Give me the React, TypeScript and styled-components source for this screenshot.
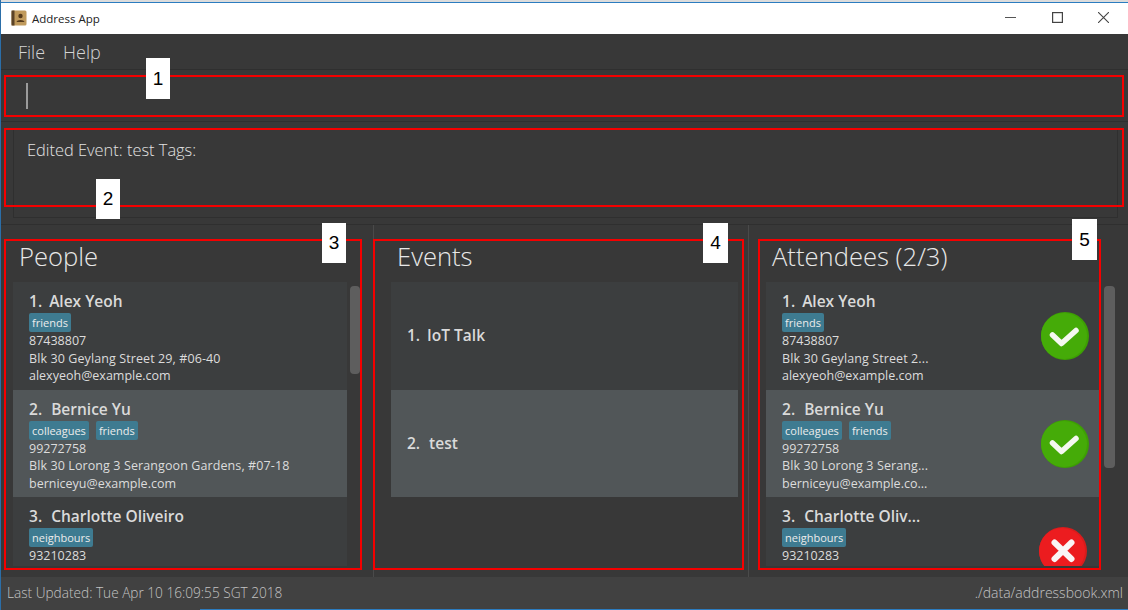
import React from "react";
import styled, { createGlobalStyle } from "styled-components";

type Person = {
  name: string;
  tags: string[];
  phone: string;
  address?: string;
  email?: string;
  going?: boolean;
};

const people: Person[] = [
  {
    name: "Alex Yeoh",
    tags: ["friends"],
    phone: "87438807",
    address: "Blk 30 Geylang Street 29, #06-40",
    email: "alexyeoh@example.com"
  },
  {
    name: "Bernice Yu",
    tags: ["colleagues", "friends"],
    phone: "99272758",
    address: "Blk 30 Lorong 3 Serangoon Gardens, #07-18",
    email: "berniceyu@example.com"
  },
  {
    name: "Charlotte Oliveiro",
    tags: ["neighbours"],
    phone: "93210283"
  }
];

const attendees: Person[] = [
  {
    name: "Alex Yeoh",
    tags: ["friends"],
    phone: "87438807",
    address: "Blk 30 Geylang Street 2...",
    email: "alexyeoh@example.com",
    going: true
  },
  {
    name: "Bernice Yu",
    tags: ["colleagues", "friends"],
    phone: "99272758",
    address: "Blk 30 Lorong 3 Serang...",
    email: "berniceyu@example.co...",
    going: true
  },
  {
    name: "Charlotte Oliv...",
    tags: ["neighbours"],
    phone: "93210283",
    going: false
  }
];

const marks = [
  { n: 1, x: 146, y: 58, w: 24, h: 41 },
  { n: 2, x: 96, y: 179, w: 24, h: 40 },
  { n: 3, x: 322, y: 223, w: 24, h: 40 },
  { n: 4, x: 703, y: 223, w: 25, h: 40 },
  { n: 5, x: 1072, y: 219, w: 25, h: 41 }
];

const outlines = [
  { x: 4, y: 75, w: 1120, h: 42 },
  { x: 4, y: 128, w: 1120, h: 79 },
  { x: 4, y: 239, w: 358, h: 331 },
  { x: 373, y: 239, w: 371, h: 331 },
  { x: 758, y: 239, w: 343, h: 331 }
];

const PersonCard = ({ person, index }: { person: Person; index: number }) => (
  <Card $selected={index === 1}>
    <div>
      <CardTitle>
        <Num $first={index === 0}>{index + 1}.</Num>
        {person.name}
      </CardTitle>
      <TagRow>
        {person.tags.map((t) => (
          <Tag key={t}>{t}</Tag>
        ))}
      </TagRow>
      <Line>{person.phone}</Line>
      {person.address && <AddressLine>{person.address}</AddressLine>}
      {person.email && <Line>{person.email}</Line>}
    </div>
    {person.going === true && (
      <Status $right={-6}>
        <svg viewBox="0 0 48 48" width="48" height="48">
          <circle cx="24" cy="24" r="24" fill="#3da003" />
          <circle cx="23" cy="24" r="23" fill="#45ab08" />
          <path d="M11.5 23 L20.5 31.5 L35 18.5" fill="none" stroke="#f5f8f1" strokeWidth="5.5" strokeLinecap="round" strokeLinejoin="round" />
        </svg>
      </Status>
    )}
    {person.going === false && (
      <Status $right={-4}>
        <svg viewBox="0 0 48 48" width="48" height="48">
          <circle cx="24" cy="24" r="24" fill="#d81c1c" />
          <circle cx="23" cy="24" r="23" fill="#ec1c1f" />
          <path d="M15.5 15.5 L32.5 32 M32.5 15.5 L15.5 32" fill="none" stroke="#faf5f5" strokeWidth="6" strokeLinecap="round" />
        </svg>
      </Status>
    )}
  </Card>
);

export default function App() {
  return (
    <Page>
      <GlobalStyle />
      <TitleBar>
        <AppTitle>
          <svg viewBox="0 0 16 16" width="16" height="16">
            <rect x="0.5" y="0.5" width="15" height="15" rx="1.5" fill="#c09a5c" />
            <rect x="0.5" y="0.5" width="3" height="15" fill="#5b4327" />
            <circle cx="9.5" cy="6" r="2.2" fill="#54391b" />
            <path d="M5.5 12 C6 9.2 13 9.2 13.5 12 Z" fill="#54391b" />
          </svg>
          Address App
        </AppTitle>
        <WindowButtons>
          <WindowButton>
            <svg viewBox="0 0 11 11" width="11" height="11">
              <path d="M0 5.5 H11" stroke="#555" strokeWidth="1" />
            </svg>
          </WindowButton>
          <WindowButton>
            <svg viewBox="0 0 11 11" width="11" height="11">
              <rect x="0.6" y="0.6" width="9.8" height="9.8" fill="none" stroke="#444" strokeWidth="1.2" />
            </svg>
          </WindowButton>
          <WindowButton>
            <svg viewBox="0 0 11 11" width="11" height="11">
              <path d="M0 0 L11 11 M11 0 L0 11" stroke="#444" strokeWidth="1.1" />
            </svg>
          </WindowButton>
        </WindowButtons>
      </TitleBar>

      <MenuBar>
        <span>File</span>
        <span>Help</span>
      </MenuBar>

      <CommandBox>
        <Caret />
      </CommandBox>

      <ResultSection>
        <ResultBox>Edited Event: test Tags:</ResultBox>
      </ResultSection>

      <Panels>
        <Panel $left={12} $right={13}>
          <PanelHeading>People</PanelHeading>
          <ListRow>
            <List>
              {people.map((p, i) => (
                <PersonCard key={p.name} person={p} index={i} />
              ))}
            </List>
            <ScrollTrack $width={10} $gap={3}>
              <ScrollThumb $height={88} />
            </ScrollTrack>
          </ListRow>
        </Panel>
        <Panel $left={17} $right={10}>
          <PanelHeading>Events</PanelHeading>
          <ListRow>
            <List>
              <EventCard>
                <CardTitle>
                  <Num $first>1.</Num>IoT Talk
                </CardTitle>
              </EventCard>
              <EventCard $selected>
                <CardTitle>
                  <Num>2.</Num>test
                </CardTitle>
              </EventCard>
            </List>
          </ListRow>
        </Panel>
        <Panel $left={17} $right={13}>
          <PanelHeading>Attendees (2/3)</PanelHeading>
          <ListRow>
            <List>
              {attendees.map((p, i) => (
                <PersonCard key={p.name} person={p} index={i} />
              ))}
            </List>
            <ScrollTrack $width={11} $gap={5}>
              <ScrollThumb $height={182} />
            </ScrollTrack>
          </ListRow>
        </Panel>
      </Panels>

      <StatusBar>
        <span>Last Updated: Tue Apr 10 16:09:55 SGT 2018</span>
        <FilePath>./data/addressbook.xml</FilePath>
      </StatusBar>

      {outlines.map((o) => (
        <Outline key={o.x + "-" + o.y} $x={o.x} $y={o.y} $w={o.w} $h={o.h} />
      ))}
      {marks.map((m) => (
        <Mark key={m.n} $x={m.x} $y={m.y} $w={m.w} $h={m.h}>
          {m.n}
        </Mark>
      ))}
    </Page>
  );
}

const GlobalStyle = createGlobalStyle`
  html, body {
    margin: 0;
    padding: 0;
    background: #383838;
  }
`;

const Page = styled.div`
  position: relative;
  width: 1128px;
  height: 610px;
  overflow: hidden;
  display: flex;
  flex-direction: column;
  background: #383838;
  font-family: "Open Sans", "Noto Sans", sans-serif;
  border-left: 1px solid #2b6ea8;
  box-sizing: border-box;
`;

const TitleBar = styled.div`
  height: 34px;
  flex: none;
  box-sizing: border-box;
  border-top: 2px solid #dcdcdc;
  display: flex;
  align-items: center;
  justify-content: space-between;
  background: #fff;
  box-shadow: inset 0 1px 0 #2b7cc0;
`;

const AppTitle = styled.div`
  display: flex;
  align-items: center;
  gap: 5px;
  padding-left: 10px;
  font-size: 11.5px;
  color: #222;
`;

const WindowButtons = styled.div`
  display: flex;
  padding-right: 1px;
  margin-top: -2px;
`;

const WindowButton = styled.div`
  width: 46.5px;
  height: 30px;
  display: flex;
  align-items: center;
  justify-content: center;
`;

const MenuBar = styled.div`
  height: 36px;
  flex: none;
  box-sizing: border-box;
  display: flex;
  align-items: center;
  gap: 18px;
  padding-left: 17px;
  font-size: 18px;
  font-weight: 300;
  color: #d4d4d4;
  border-bottom: 1px solid #2f2f2f;
`;

const CommandBox = styled.div`
  height: 52px;
  flex: none;
  box-sizing: border-box;
  display: flex;
  align-items: center;
  padding-left: 25px;
  border-bottom: 1px solid #2f2f2f;
`;

const Caret = styled.div`
  width: 2px;
  height: 26px;
  margin-top: 1px;
  background: #9b9b9b;
`;

const ResultSection = styled.div`
  height: 103px;
  flex: none;
  box-sizing: border-box;
  padding: 6px 10px 6px 12px;
  border-bottom: 1px solid #2f2f2f;
`;

const ResultBox = styled.div`
  height: 100%;
  box-sizing: border-box;
  padding: 10px 13px;
  border: 1px solid #2f2f2f;
  border-top: none;
  font-size: 16.4px;
  font-weight: 300;
  color: #e2e2e2;
`;

const Panels = styled.div`
  flex: 1;
  min-height: 0;
  display: grid;
  grid-template-columns: 373px 375px 1fr;
  grid-template-rows: minmax(0, 1fr);
`;

const Panel = styled.section<{ $left: number; $right: number }>`
  display: flex;
  flex-direction: column;
  min-width: 0;
  min-height: 0;
  box-sizing: border-box;
  padding: 0 ${(p) => p.$right}px 11px ${(p) => p.$left}px;
  border-right: 1px solid #4a4a4a;
  &:last-child {
    border-right: none;
  }
`;

const PanelHeading = styled.h2`
  margin: 0;
  height: 57px;
  flex: none;
  box-sizing: border-box;
  padding: 6px 0 0 6px;
  display: flex;
  align-items: center;
  font-size: 25.6px;
  font-weight: 300;
  color: #e8e8e8;
`;

const ListRow = styled.div`
  flex: 1;
  min-height: 0;
  display: flex;
`;

const List = styled.div`
  flex: 1;
  min-width: 0;
  overflow: hidden;
`;

const ScrollTrack = styled.div<{ $width: number; $gap: number }>`
  flex: none;
  width: ${(p) => p.$width}px;
  margin-left: ${(p) => p.$gap}px;
  padding-top: 4px;
`;

const ScrollThumb = styled.div<{ $height: number }>`
  height: ${(p) => p.$height}px;
  border-radius: 4px;
  background: #5e5e5e;
`;

const Card = styled.article<{ $selected?: boolean }>`
  height: 107.5px;
  box-sizing: border-box;
  padding: 9px 16px 0;
  display: flex;
  justify-content: space-between;
  background: ${(p) => (p.$selected ? "#515658" : "#3c3e3f")};
`;

const EventCard = styled.article<{ $selected?: boolean }>`
  height: 107.5px;
  box-sizing: border-box;
  padding: 0 16px;
  display: flex;
  align-items: center;
  background: ${(p) => (p.$selected ? "#515658" : "#3c3e3f")};
`;

const CardTitle = styled.div`
  height: 21px;
  font-size: 15.5px;
  font-weight: 600;
  line-height: 21px;
  color: #dadada;
  white-space: nowrap;
`;

// the 1 is a narrow digit in the original font, so its gap is tighter
const Num = styled.span<{ $first?: boolean }>`
  margin-right: ${(p) => (p.$first ? 7 : 9)}px;
`;

const TagRow = styled.div`
  display: flex;
  gap: 7px;
  margin-top: 1px;
`;

const Tag = styled.span`
  height: 19px;
  box-sizing: border-box;
  padding: 0 3px;
  border-radius: 2px;
  background: #3e7b91;
  color: #ececec;
  font-size: 11px;
  line-height: 19px;
`;

const Line = styled.div`
  height: 17.5px;
  font-size: 12.5px;
  line-height: 17.5px;
  color: #dcdcdc;
  white-space: nowrap;
`;

const AddressLine = styled(Line)`
  letter-spacing: 0.1px;
`;

const Status = styled.div<{ $right: number }>`
  flex: none;
  align-self: flex-start;
  margin-top: 21px;
  margin-right: ${(p) => p.$right}px;
  height: 48px;
`;

const StatusBar = styled.footer`
  height: 33px;
  flex: none;
  box-sizing: border-box;
  display: flex;
  align-items: center;
  justify-content: space-between;
  padding: 0 5px 1px 6px;
  background: #414141;
  font-size: 13.65px;
  font-weight: 300;
  color: #c4c4c4;
  border-bottom: 1px solid;
  border-image: linear-gradient(90deg, #414141 200px, #2b7cc0 200px) 1;
`;

const FilePath = styled.span`
  font-size: 14px;
`;

// annotation overlays drawn on top of the screenshot
const Outline = styled.div<{ $x: number; $y: number; $w: number; $h: number }>`
  position: absolute;
  left: ${(p) => p.$x - 1}px;
  top: ${(p) => p.$y}px;
  width: ${(p) => p.$w}px;
  height: ${(p) => p.$h}px;
  box-sizing: border-box;
  border: 2px solid #f50000;
  pointer-events: none;
`;

const Mark = styled.div<{ $x: number; $y: number; $w: number; $h: number }>`
  position: absolute;
  left: ${(p) => p.$x - 1}px;
  top: ${(p) => p.$y}px;
  width: ${(p) => p.$w}px;
  height: ${(p) => p.$h}px;
  display: flex;
  align-items: center;
  justify-content: center;
  background: #fff;
  color: #000;
  font-family: "Liberation Sans", sans-serif;
  font-size: 19px;
`;
